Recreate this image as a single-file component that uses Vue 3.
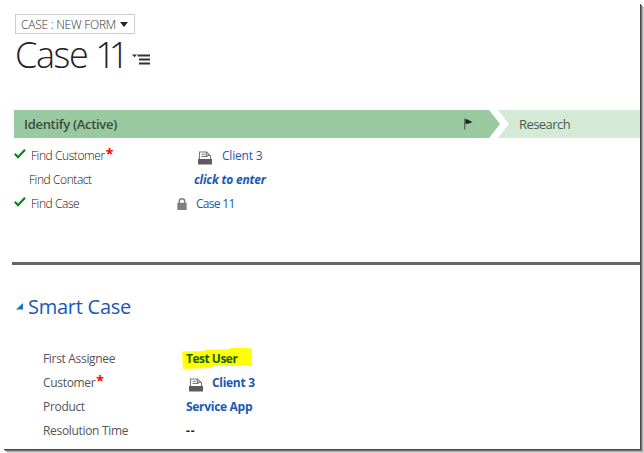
<template>
  <div class="page">
    <div class="sheet">
      <header class="header">
        <button type="button" class="form-select">
          <span>CASE : NEW FORM</span>
          <svg width="8" height="5" viewBox="0 0 8 5">
            <path d="M0 0H8L4 5Z" fill="#222" />
          </svg>
        </button>
        <div class="title-row">
          <h1 class="title">Case <span class="title__number">11</span></h1>
          <svg class="title-menu" width="18" height="12" viewBox="0 0 18 12">
            <path d="M0 0.5H5L2.5 3.2Z" fill="#333" />
            <path
              d="M5.5 1.5H18M7 5.5H18M7 9.5H18"
              stroke="#333"
              stroke-width="1.8"
            />
          </svg>
        </div>
      </header>

      <nav class="process">
        <div class="stage stage--active">
          <span>Identify (Active)</span>
          <svg class="flag" width="9" height="12" viewBox="0 0 9 12">
            <path d="M0.8 0.5V11.5" stroke="#444" stroke-width="1" />
            <path d="M1.5 1L3.5 1.4L8.5 4.2L3.5 5.8L1.5 6Z" fill="#222" />
          </svg>
        </div>
        <div class="stage stage--next">Research</div>
      </nav>

      <ul class="steps">
        <li v-for="step in steps" :key="step.label" class="step">
          <span class="step__check">
            <svg v-if="step.done" width="12" height="10" viewBox="0 0 12 10">
              <path
                d="M0.8 4.8L4 8.3L11 0.8"
                fill="none"
                stroke="#0f8213"
                stroke-width="2.1"
              />
            </svg>
          </span>
          <span class="step__label" :class="{ 'is-open': !step.done }">
            <span>{{ step.label }}</span>
            <i v-if="step.required" class="required">*</i>
          </span>
          <span class="step__value" :class="step.name">
            <svg
              v-if="step.icon === 'account'"
              class="account"
              width="14"
              height="14"
              viewBox="0 0 14 14"
            >
              <path
                d="M1.5 8V1H8.5L12.5 5V8M3.5 3.3H7M3.5 5.5H9.5M8.3 1V4.5H12"
                fill="none"
                stroke="#777"
                stroke-width="1.1"
              />
              <path d="M0 8H14V13.5H0Z" fill="#5c5c5c" />
            </svg>
            <svg
              v-if="step.icon === 'lock'"
              class="lock"
              width="10"
              height="12"
              viewBox="0 0 10 12"
            >
              <path
                d="M2.3 6V3.3A2.7 2.5 0 0 1 7.7 3.3V6"
                fill="none"
                stroke="#808080"
                stroke-width="1.5"
              />
              <path d="M0.3 4.8H9.7V12H0.3Z" fill="#808080" />
            </svg>
            <span>{{ step.value }}</span>
          </span>
        </li>
      </ul>

      <section class="section">
        <h2 class="section__title">
          <svg width="7" height="7" viewBox="0 0 7 7">
            <path d="M7 0V6.5H0Z" fill="#1673c4" />
          </svg>
          <span>Smart Case</span>
        </h2>
        <dl class="fields">
          <div v-for="field in fields" :key="field.label" class="field">
            <dt>
              <span>{{ field.label }}</span>
              <i v-if="field.required" class="required">*</i>
            </dt>
            <dd :class="field.name">
              <svg
                v-if="field.name === 'customer'"
                class="marker-icon"
                width="14"
                height="14"
                viewBox="0 0 14 14"
              >
                <path
                  d="M1.5 8V1H8.5L12.5 5V8M3.5 3.3H7M3.5 5.5H9.5M8.3 1V4.5H12"
                  fill="none"
                  stroke="#777"
                  stroke-width="1.1"
                />
                <path d="M0 8H14V13.5H0Z" fill="#5c5c5c" />
              </svg>
              <svg
                v-if="field.name === 'assignee'"
                class="highlight"
                width="71"
                height="21"
                viewBox="0 0 71 21"
              >
                <path
                  d="M0 3.5L22 3L24 1.5L46 1.5L49 0H66L70 1V18L62 17.5L48 18L32 18L28 20L1 21Z"
                  fill="#ff0"
                />
              </svg>
              <span class="field__text">{{ field.value }}</span>
            </dd>
          </div>
        </dl>
      </section>
    </div>
  </div>
</template>

<script setup>
const steps = [
  {
    name: "find-customer",
    label: "Find Customer",
    value: "Client 3",
    icon: "account",
    done: true,
    required: true,
  },
  { name: "find-contact", label: "Find Contact", value: "click to enter" },
  {
    name: "find-case",
    label: "Find Case",
    value: "Case 11",
    icon: "lock",
    done: true,
  },
];

const fields = [
  { name: "assignee", label: "First Assignee", value: "Test User" },
  { name: "customer", label: "Customer", value: "Client 3", required: true },
  { name: "product", label: "Product", value: "Service App" },
  { name: "resolution", label: "Resolution Time", value: "--" },
];
</script>

<style>
body {
  margin: 0;
  background: #fff;
}
</style>

<style scoped>
.page {
  isolation: isolate;
  width: 644px;
  height: 453px;
  overflow: hidden;
  background: #fff;
}

.sheet {
  position: relative;
  box-sizing: border-box;
  width: 640px;
  height: 449px;
  padding-top: 14px;
  background: #fff;
  font-family: "Open Sans", "Noto Sans", sans-serif;
  font-size: 12px;
  line-height: 24px;
  color: #555;
}

/* drop shadow, starts a few pixels in from the top and left corners */
.sheet::before {
  content: "";
  position: absolute;
  z-index: -1;
  top: 3px;
  right: 0;
  bottom: 0;
  left: 3px;
  box-shadow:
    1px 1px 0 #484848,
    2px 2px 0 #777,
    3px 3px 0 #aaa,
    4px 4px 0 #d5d5d5;
}

.header {
  padding-left: 15px;
}

.form-select {
  display: flex;
  align-items: center;
  justify-content: space-between;
  box-sizing: border-box;
  width: 120px;
  height: 20px;
  padding: 0 6px 0 5px;
  border: 1px solid #ccc;
  background: #fff;
  font: 300 12px "Open Sans", sans-serif;
  letter-spacing: -0.25px;
  color: #333;
  white-space: nowrap;
}

.title-row {
  display: flex;
  height: 43px;
}

.title {
  width: 117px;
  margin: 0;
  font-size: 36px;
  font-weight: 300;
  line-height: 42px;
  letter-spacing: -1.4px;
  color: #222;
  white-space: nowrap;
}

.title__number {
  letter-spacing: -7px;
}

.title-menu {
  margin-top: 20px;
}

.process {
  display: flex;
  height: 28px;
  margin: 33px 0 0 14px;
  font-size: 13px;
  line-height: 28px;
}

.stage {
  box-sizing: border-box;
}

.stage--active {
  display: flex;
  align-items: center;
  justify-content: space-between;
  width: 486px;
  padding: 0 27px 0 10px;
  background: #99ca9f;
  clip-path: polygon(0 0, 475px 0, 100% 50%, 475px 100%, 0 100%);
  font-weight: 600;
  letter-spacing: -0.3px;
  color: #3b4a3d;
}

.stage--next {
  flex: 1;
  margin-left: -2px;
  padding-left: 21px;
  background: #d4ead6;
  clip-path: polygon(0 0, 100% 0, 100% 100%, 0 100%, 11px 50%);
  letter-spacing: -0.55px;
  color: #4c5a4e;
}

.steps {
  height: 118px;
  margin: 0;
  padding: 6px 0 0 14px;
  list-style: none;
}

.step {
  display: flex;
  height: 24px;
  white-space: nowrap;
}

.step__check {
  width: 17px;
}

.step__check svg {
  display: block;
  margin-top: 5px;
}

.step__label {
  display: flex;
  width: 146px;
  font-weight: 300;
  letter-spacing: -0.42px;
  color: #111;
}

.step__label.is-open {
  margin-left: -2px;
  width: 148px;
}

.required {
  margin-left: 1px;
  font-size: 14px;
  font-style: normal;
  font-weight: 700;
  line-height: 20px;
  color: #f00;
}

.step__value {
  display: flex;
  letter-spacing: -0.2px;
  color: #1759b5;
}

.step__value.find-customer {
  padding-left: 21px;
}

.step__value.find-contact {
  padding-left: 17px;
  font-style: italic;
  font-weight: 700;
}

.step__value.find-case {
  letter-spacing: -0.7px;
}

.account {
  margin: 7px 10px 0 0;
}

.lock {
  margin: 6px 9px 0 0;
}

.section {
  margin-left: 12px;
  border-top: 3px solid #666;
}

.section__title {
  display: flex;
  align-items: center;
  gap: 5px;
  height: 30px;
  margin: 27px 0 0 4px;
  font-size: 20px;
  font-weight: 400;
  letter-spacing: -0.25px;
  color: #1759b5;
}

.section__title svg {
  margin-top: -2px;
}

.fields {
  margin: 25px 0 0;
  padding-left: 31px;
}

.field {
  display: flex;
  height: 24px;
}

.field dt {
  display: flex;
  width: 143px;
  letter-spacing: -0.32px;
}

.field dd {
  position: relative;
  display: flex;
  margin: 0;
  font-weight: 700;
  letter-spacing: -0.3px;
  color: #1759b5;
  white-space: nowrap;
}

.field dd.assignee {
  letter-spacing: -0.5px;
  color: #17600a;
}

.field dd.resolution {
  letter-spacing: 0.8px;
  color: #222;
}

.field__text {
  position: relative;
}

.highlight {
  position: absolute;
  top: 1px;
  left: -4px;
}

.marker-icon {
  margin: 7px 9px 0 3px;
}
</style>
